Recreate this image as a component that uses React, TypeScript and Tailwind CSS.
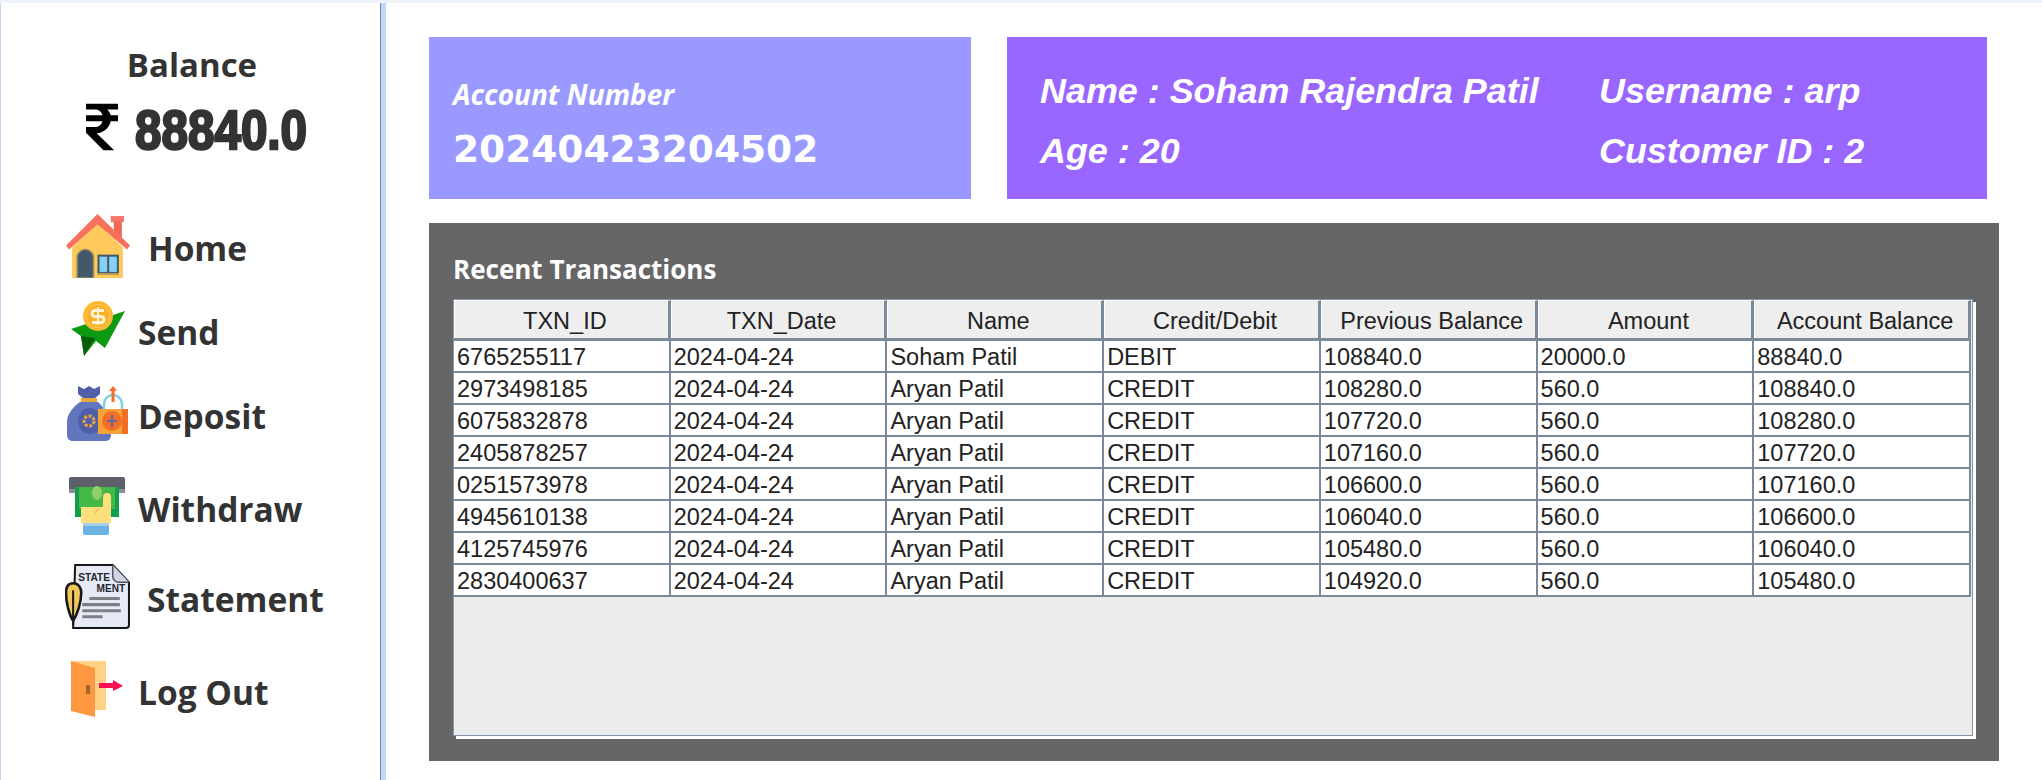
import type { ReactNode } from "react";

const columns = ["TXN_ID", "TXN_Date", "Name", "Credit/Debit", "Previous Balance", "Amount", "Account Balance"];

const rows = [
  ["6765255117", "2024-04-24", "Soham Patil", "DEBIT", "108840.0", "20000.0", "88840.0"],
  ["2973498185", "2024-04-24", "Aryan Patil", "CREDIT", "108280.0", "560.0", "108840.0"],
  ["6075832878", "2024-04-24", "Aryan Patil", "CREDIT", "107720.0", "560.0", "108280.0"],
  ["2405878257", "2024-04-24", "Aryan Patil", "CREDIT", "107160.0", "560.0", "107720.0"],
  ["0251573978", "2024-04-24", "Aryan Patil", "CREDIT", "106600.0", "560.0", "107160.0"],
  ["4945610138", "2024-04-24", "Aryan Patil", "CREDIT", "106040.0", "560.0", "106600.0"],
  ["4125745976", "2024-04-24", "Aryan Patil", "CREDIT", "105480.0", "560.0", "106040.0"],
  ["2830400637", "2024-04-24", "Aryan Patil", "CREDIT", "104920.0", "560.0", "105480.0"],
];

function HomeIcon() {
  return (
    <svg viewBox="0 0 64 64" className="w-[65px] h-[65px]">
      <rect x="45" y="3" width="13" height="6" fill="#f8766a" />
      <rect x="48" y="8" width="8" height="18" fill="#ee6a55" />
      <path d="M7 34 32 10 57 34V64H7Z" fill="#fdc95a" />
      <path d="M1 32 32 1 64 32 61 36 32 11 4 36Z" fill="#f7725c" />
      <path d="M12 64V44a8 8 0 0 1 16 0V64Z" fill="#45586b" stroke="#8f8a5e" strokeWidth="1.5" />
      <rect x="33" y="42" width="19" height="17" fill="#86d0f4" stroke="#45586b" strokeWidth="2" />
      <path d="M42.5 42V59" stroke="#45586b" strokeWidth="2" />
      <path d="M32 60H53" stroke="#b39a55" strokeWidth="2" />
    </svg>
  );
}

function SendIcon() {
  return (
    <svg viewBox="0 0 54 56" className="w-[54px] h-[56px]">
      <path d="M0 28 54 10 34 47 25 40 13 55 10 35Z" fill="#0c9a12" />
      <path d="M10 35 24 37 13 55Z" fill="#075c0b" />
      <circle cx="27" cy="15" r="15" fill="#fdb833" />
      <circle cx="27" cy="15" r="11.5" fill="#fbb024" stroke="#ffc95c" strokeWidth="1" />
      <path d="M33 9.5H24a3 3 0 0 0 0 6h6a3 3 0 0 1 0 6H21" fill="none" stroke="#fff3d6" strokeWidth="3" />
      <path d="M27 6V24" stroke="#fff3d6" strokeWidth="2" />
    </svg>
  );
}

function DepositIcon() {
  return (
    <svg viewBox="0 0 62 58" className="w-[62px] h-[58px]">
      <path d="M11 2 17 5 22 2 27 5 33 2 33 10 28 14H16L11 10Z" fill="#4f5fa8" />
      <rect x="14" y="14" width="16" height="4" fill="#eda63c" />
      <path d="M13 18H31C38 24 44 34 44 46V50C44 55 42 57 38 57H6C2 57 0 55 0 50V38C0 30 6 23 13 18Z" fill="#6276c0" />
      <ellipse cx="23" cy="37" rx="12" ry="13" fill="#4f5fa8" />
      <circle cx="22" cy="37" r="5" fill="none" stroke="#eda63c" strokeWidth="3" strokeDasharray="3 1.5" />
      <path d="M37 26V20a9 9 0 0 1 18 0V26" fill="none" stroke="#7fd0e0" strokeWidth="2.5" />
      <path d="M46 2 50 7H47.5V18H44.5V7H42Z" fill="#f36f25" />
      <rect x="31" y="25" width="30" height="25" fill="#f8a23a" />
      <rect x="55" y="25" width="6" height="25" fill="#f36f25" />
      <circle cx="45" cy="37" r="10" fill="#f36f25" />
      <path d="M45 31V43M40 37H50" stroke="#5b67a8" strokeWidth="2" />
    </svg>
  );
}

function WithdrawIcon() {
  return (
    <svg viewBox="0 0 56 58" className="w-[56px] h-[58px]">
      <path d="M2 0H54a2 2 0 0 1 2 2V16H0V2a2 2 0 0 1 2-2Z" fill="#5e6069" />
      <path d="M0 12H56V16H0Z" fill="#8c8e96" />
      <rect x="6" y="10" width="44" height="30" fill="#0ea04b" />
      <rect x="10" y="10" width="36" height="22" fill="#46b848" />
      <ellipse cx="28" cy="16" rx="5" ry="7" fill="#8fd06a" />
      <path d="M12 30H34V20a4 4 0 0 1 8 0V46H12Z" fill="#fde07c" />
      <path d="M26 36l4-5" stroke="#f0bf5a" strokeWidth="2" fill="none" />
      <rect x="14" y="46" width="26" height="12" rx="2" fill="#6cb2e4" />
      <rect x="14" y="46" width="26" height="3" fill="#a5d3ee" />
    </svg>
  );
}

function StatementIcon() {
  return (
    <svg viewBox="0 0 64 64" className="w-[65px] h-[65px]">
      <path d="M10 1H47L63 18V60a3 3 0 0 1-3 3H8Z" fill="#e6eaf6" stroke="#17181c" strokeWidth="2" />
      <path d="M47 1V12a6 6 0 0 0 6 6H63" fill="#cfd5e6" stroke="#555" strokeWidth="1.5" />
      <text x="13" y="17" fontFamily="Liberation Sans, sans-serif" fontSize="10" fontWeight="700" fill="#25262b">STATE</text>
      <text x="31" y="28" fontFamily="Liberation Sans, sans-serif" fontSize="10" fontWeight="700" fill="#25262b">MENT</text>
      <path d="M24 34H54M17 40H54M17 46H55M17 52H37" stroke="#7c7f86" strokeWidth="3" />
      <path d="M8 19C3 19 1 23 1 28C1 38 4 50 8 56C12 50 16 38 16 28C16 23 13 19 8 19Z" fill="#f0c85a" stroke="#17181c" strokeWidth="2.5" />
      <path d="M8 26V60" stroke="#17181c" strokeWidth="2" />
    </svg>
  );
}

function LogOutIcon() {
  return (
    <svg viewBox="0 0 52 56" className="w-[52px] h-[56px]">
      <rect x="0" y="0" width="35" height="49" fill="#ffd285" />
      <path d="M0 0 24 7V56L0 50Z" fill="#fe9840" />
      <rect x="15" y="24" width="4" height="9" rx="1" fill="#a8622c" />
      <path d="M28 22H42V19L52 25 42 30V27H28Z" fill="#fd0e50" />
    </svg>
  );
}

function RupeeIcon() {
  return (
    <svg viewBox="0 0 33 48" className="w-[32px] h-[48px]">
      <path
        d="M0 0H33V6H22C24 8 25 10 25.500 12H33V18H25.500C24 25 18 30 11 30.500L29 48H18L0 30V24H9C13 24 16 22 17 18H0V12H17C16 8 13 6 9 6H0Z"
        fill="#000"
      />
    </svg>
  );
}

function NavItem({ icon, label, gap, className }: { icon: ReactNode; label: string; gap: string; className: string }) {
  return (
    <div className={`flex items-center font-['Open_Sans',sans-serif] text-[33.5px] font-bold text-[#333333] ${className}`}>
      {icon}
      <span className={`pt-[6px] ${gap}`}>{label}</span>
    </div>
  );
}

export default function App() {
  return (
    <div className="w-[2042px] h-[780px] overflow-hidden bg-white pt-[3px] flex relative">
      <div className="absolute top-0 left-0 right-0 h-[3px] bg-[#eef3fb]" />

      {/* Sidebar */}
      <aside className="w-[386px] h-full shrink-0 border-l border-l-[#c5d9f5] border-r-[5px] border-r-[#c3d8f5] flex flex-col relative">
        <div className="absolute top-0 bottom-0 right-0 w-px bg-[#6f86b8]" />
        <div className="h-[210px] pt-[40px] flex flex-col items-center">
          <div className="font-['Open_Sans',sans-serif] text-[33px] leading-[44px] font-bold text-[#333333] ml-[2px]">Balance</div>
          <div className="flex items-start gap-[17px] mt-[16px] ml-[10px]">
            <RupeeIcon />
            <div className="w-[171px] pt-[3px]">
              <span className="inline-block origin-left scale-x-[0.85] font-['Liberation_Sans',sans-serif] text-[56px] leading-[48px] font-bold text-[#333333] [-webkit-text-stroke:2.5px_#333333]">
                88840.0
              </span>
            </div>
          </div>
        </div>

        <nav className="flex flex-col">
          <NavItem icon={<HomeIcon />} label="Home" gap="ml-[18px]" className="pl-[64px] h-[65px]" />
          <NavItem icon={<SendIcon />} label="Send" gap="ml-[13px]" className="pl-[70px] h-[56px] mt-[23px]" />
          <NavItem icon={<DepositIcon />} label="Deposit" gap="ml-[9px]" className="pl-[66px] h-[58px] mt-[27px]" />
          <NavItem icon={<WithdrawIcon />} label="Withdraw" gap="ml-[13px]" className="pl-[68px] h-[58px] mt-[35px]" />
          <NavItem icon={<StatementIcon />} label="Statement" gap="ml-[17px]" className="pl-[64px] h-[65px] mt-[29px]" />
          <NavItem icon={<LogOutIcon />} label="Log Out" gap="ml-[15px]" className="pl-[70px] h-[56px] mt-[32px]" />
        </nav>
      </aside>

      {/* Main */}
      <main className="flex-1 pl-[43px] pt-[34px]">
        <div className="flex">
          <div className="w-[542px] h-[162px] bg-[#9999ff] text-white pl-[24px] pt-[38px]">
            <div className="font-['Open_Sans',sans-serif] italic font-bold text-[28px] leading-[38px]">Account Number</div>
            <div className="font-['DejaVu_Sans',sans-serif] font-bold text-[37.5px] leading-[44px] mt-[14px]">20240423204502</div>
          </div>
          <div className="w-[980px] h-[162px] ml-[36px] bg-[#9966ff] text-white font-['Liberation_Sans',sans-serif] italic font-bold text-[35.9px] leading-[42px] pl-[33px] pt-[33px] grid grid-cols-[559px_1fr] gap-y-[18px] content-start">
            <div>Name : Soham Rajendra Patil</div>
            <div>Username : arp</div>
            <div>Age : 20</div>
            <div>Customer ID : 2</div>
          </div>
        </div>

        <section className="w-[1570px] h-[538px] mt-[24px] bg-[#666666] pl-[24px] pt-[27px]">
          <div className="font-['Open_Sans',sans-serif] font-bold text-[26px] leading-[38px] text-white">Recent Transactions</div>
          <div className="w-[1520px] h-[437px] mt-[11px] bg-[#ececec] border border-[#8496a8] shadow-[3px_3px_0_#ffffff] font-['Liberation_Sans',sans-serif] text-[23.5px] leading-[26px] text-[#222222]">
            <div className="grid grid-cols-7 w-[1517px] h-[41px] border-b-[3px] border-[#7b8a9b]">
              {columns.map((col) => (
                <div key={col} className="flex items-center justify-center pl-[7px] pt-[3px] bg-[#eeeeee] border-t border-l border-t-white border-l-white border-r-[3px] border-r-[#7b8a9b]">
                  {col}
                </div>
              ))}
            </div>
            {rows.map((row) => (
              <div key={row[0]} className="grid grid-cols-7 w-[1517px] h-[32px] border-b-2 border-[#7b8a9b] bg-white">
                {row.map((cell, i) => (
                  <div key={i} className="flex items-center pl-[3px] pt-[2px] border-r-2 border-[#7b8a9b] whitespace-nowrap">
                    {cell}
                  </div>
                ))}
              </div>
            ))}
          </div>
        </section>
      </main>
    </div>
  );
}
